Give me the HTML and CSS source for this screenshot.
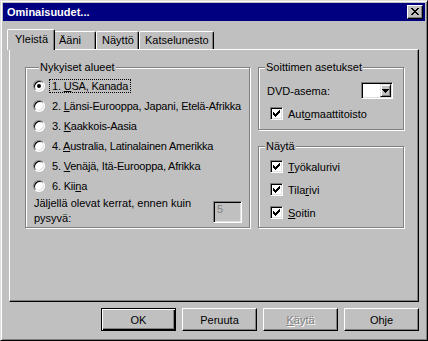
FILE: index.html
```html
<!DOCTYPE html>
<html lang="fi">
<head>
  <meta charset="UTF-8">
  <title>Ominaisuudet</title>
  <link rel="stylesheet" href="styles.css">
</head>
<body>
  <div class="window">
    <div class="titlebar">
      <span class="title">Ominaisuudet...</span>
      <button class="close-btn">
        <svg width="8" height="7" viewBox="0 0 8 7" shape-rendering="crispEdges"><path fill="#000" d="M0 0h2v1H0zM6 0h2v1H6zM1 1h2v1H1zM5 1h2v1H5zM2 2h4v1H2zM3 3h2v1H3zM2 4h4v1H2zM1 5h2v1H1zM5 5h2v1H5zM0 6h2v1H0zM6 6h2v1H6z"/></svg>
      </button>
    </div>

    <div class="dialog-body">
      <div class="tabs">
        <div class="tab active">Yleistä</div>
        <div class="tab">Ääni</div>
        <div class="tab">Näyttö</div>
        <div class="tab">Katselunesto</div>
      </div>

      <div class="panel">
        <div class="group regions">
          <div class="group-title">Nykyiset alueet</div>
          <div class="options">
            <div class="option"><span class="radio checked"></span><span class="option-text focus">1. <u>U</u>SA, Kanada</span></div>
            <div class="option"><span class="radio"></span><span class="option-text">2. <u>L</u>änsi-Eurooppa, Japani, Etelä-Afrikka</span></div>
            <div class="option"><span class="radio"></span><span class="option-text">3. <u>K</u>aakkois-Aasia</span></div>
            <div class="option"><span class="radio"></span><span class="option-text">4. <u>A</u>ustralia, Latinalainen Amerikka</span></div>
            <div class="option"><span class="radio"></span><span class="option-text">5. <u>V</u>enäjä, Itä-Eurooppa, Afrikka</span></div>
            <div class="option"><span class="radio"></span><span class="option-text">6. Kii<u>n</u>a</span></div>
          </div>
          <div class="remaining">
            <span class="remaining-text">Jäljellä olevat kerrat, ennen kuin<br>pysyvä:</span>
            <span class="textbox">5</span>
          </div>
        </div>

        <div class="side">
          <div class="group player">
            <div class="group-title">Soittimen asetukset</div>
            <div class="field-row">
              <span>DVD-asema:</span>
              <span class="combo">
                <span class="combo-btn">
                  <svg width="7" height="4" viewBox="0 0 7 4" shape-rendering="crispEdges"><path fill="#000" d="M0 0h7v1H0zM1 1h5v1H1zM2 2h3v1H2zM3 3h1v1H3z"/></svg>
                </span>
              </span>
            </div>
            <div class="check autoplay">
              <span class="checkbox"><svg width="7" height="7" viewBox="0 0 7 7" shape-rendering="crispEdges"><path fill="#000" d="M0 2h1v3H0zM1 3h1v3H1zM2 4h1v3H2zM3 3h1v3H3zM4 2h1v3H4zM5 1h1v3H5zM6 0h1v3H6z"/></svg></span>
              <span>Aut<u>o</u>maattitoisto</span>
            </div>
          </div>

          <div class="group show">
            <div class="group-title">Näytä</div>
            <div class="checks">
              <div class="check">
                <span class="checkbox"><svg width="7" height="7" viewBox="0 0 7 7" shape-rendering="crispEdges"><path fill="#000" d="M0 2h1v3H0zM1 3h1v3H1zM2 4h1v3H2zM3 3h1v3H3zM4 2h1v3H4zM5 1h1v3H5zM6 0h1v3H6z"/></svg></span>
                <span><u>T</u>yökalurivi</span>
              </div>
              <div class="check">
                <span class="checkbox"><svg width="7" height="7" viewBox="0 0 7 7" shape-rendering="crispEdges"><path fill="#000" d="M0 2h1v3H0zM1 3h1v3H1zM2 4h1v3H2zM3 3h1v3H3zM4 2h1v3H4zM5 1h1v3H5zM6 0h1v3H6z"/></svg></span>
                <span>Tila<u>r</u>ivi</span>
              </div>
              <div class="check">
                <span class="checkbox"><svg width="7" height="7" viewBox="0 0 7 7" shape-rendering="crispEdges"><path fill="#000" d="M0 2h1v3H0zM1 3h1v3H1zM2 4h1v3H2zM3 3h1v3H3zM4 2h1v3H4zM5 1h1v3H5zM6 0h1v3H6z"/></svg></span>
                <span><u>S</u>oitin</span>
              </div>
            </div>
          </div>
        </div>
      </div>

      <div class="buttons">
        <button class="btn default">OK</button>
        <button class="btn">Peruuta</button>
        <button class="btn disabled"><u>K</u>äytä</button>
        <button class="btn">Ohje</button>
      </div>
    </div>
  </div>
</body>
</html>
```

FILE: styles.css
```css
body {
  margin: 0;
  font: 11px "Liberation Sans", Arial, sans-serif;
  color: #000;
}

.window {
  width: 428px;
  height: 341px;
  box-sizing: border-box;
  background: #c0c0c0;
  border: 1px solid;
  border-color: #dfdfdf #000 #000 #dfdfdf;
  box-shadow: inset 1px 1px #fff, inset -1px -1px #808080;
  padding: 2px;
}

.titlebar {
  height: 18px;
  background: #000080;
  color: #fff;
  font-weight: bold;
  display: flex;
  align-items: center;
  justify-content: space-between;
  padding-left: 4px;
}

.close-btn {
  width: 16px;
  height: 14px;
  margin-right: 2px;
  box-sizing: border-box;
  padding: 0 0 1px;
  border: 1px solid;
  border-color: #fff #000 #000 #fff;
  box-shadow: inset -1px -1px #808080;
  background: #c0c0c0;
  display: flex;
  align-items: center;
  justify-content: center;
}

.dialog-body {
  padding: 0 6px;
}

/* tabs */
.tabs {
  display: flex;
  align-items: flex-end;
  height: 20px;
  margin-top: 8px;
}

.tab {
  height: 18px;
  min-width: 43px;
  box-sizing: border-box;
  padding: 2px 4px 0 5px;
  line-height: 13px;
  border: 1px solid;
  border-bottom: none;
  border-color: #fff #000 #000 #fff;
  border-radius: 2px 2px 0 0;
  box-shadow: inset -1px 0 #808080;
}

.tab.active {
  height: 21px;
  margin: 0 -2px -1px;
  padding: 3px 6px 0 7px;
  position: relative;
  z-index: 1;
  background: #c0c0c0;
}

.panel {
  height: 253px;
  box-sizing: border-box;
  border: 1px solid;
  border-color: #fff #000 #000 #fff;
  box-shadow: inset -1px -1px #808080;
  padding: 17px 0 0 15px;
  display: flex;
  gap: 8px;
}

/* group boxes */
.group {
  box-sizing: border-box;
  border: 1px solid #808080;
  box-shadow: 1px 1px #fff, inset 1px 1px #fff;
}

.group-title {
  width: max-content;
  margin: -7px 0 0 6px;
  padding: 0 1px;
  line-height: 13px;
  background: #c0c0c0;
}

.regions {
  width: 225px;
  height: 161px;
  padding: 0 7px;
}

.options {
  margin-top: 2px;
}

.option {
  display: flex;
  align-items: center;
  height: 20px;
  white-space: nowrap;
}

.radio {
  flex: none;
  width: 12px;
  height: 12px;
  box-sizing: border-box;
  margin-right: 4px;
  border-radius: 50%;
  border: 1px solid;
  border-color: #808080 #fff #fff #808080;
  box-shadow: inset 1px 1px #000, inset -1px -1px #dfdfdf;
  background: #fff;
  display: flex;
  align-items: center;
  justify-content: center;
}

.radio.checked::after {
  content: "";
  width: 4px;
  height: 4px;
  border-radius: 50%;
  background: #000;
}

.option-text {
  padding: 0 2px;
  line-height: 12px;
  border: 1px dotted transparent;
  letter-spacing: -0.2px;
}

.option-text.focus {
  border-color: #000;
}

.remaining {
  display: flex;
  justify-content: space-between;
  padding-left: 1px;
  white-space: nowrap;
}

.remaining-text {
  line-height: 15px;
}

.textbox {
  width: 29px;
  height: 22px;
  box-sizing: border-box;
  margin-top: 5px;
  padding: 1px 0 0 3px;
  line-height: 13px;
  color: #808080;
  border: 1px solid;
  border-color: #808080 #fff #fff #808080;
  box-shadow: inset 1px 1px #000, inset -1px -1px #dfdfdf;
}

.side {
  width: 146px;
  display: flex;
  flex-direction: column;
  gap: 16px;
}

.player {
  height: 63px;
}

.show {
  height: 82px;
}

.field-row {
  display: flex;
  align-items: center;
  justify-content: space-between;
  height: 17px;
  margin: 8px 10px 0 8px;
}

.combo {
  width: 32px;
  height: 17px;
  box-sizing: border-box;
  padding: 1px;
  border: 1px solid;
  border-color: #808080 #fff #fff #808080;
  box-shadow: inset 1px 1px #000, inset -1px -1px #dfdfdf;
  background: #fff;
  display: flex;
  justify-content: flex-end;
}

.combo-btn {
  width: 11px;
  box-sizing: border-box;
  border: 1px solid;
  border-color: #dfdfdf #000 #000 #dfdfdf;
  box-shadow: inset 1px 1px #fff, inset -1px -1px #808080;
  background: #c0c0c0;
  display: flex;
  align-items: center;
  justify-content: center;
}

.check {
  display: flex;
  align-items: center;
  height: 13px;
  margin-left: 11px;
}

.autoplay {
  margin-top: 8px;
}

.checks {
  display: flex;
  flex-direction: column;
  gap: 10px;
  margin-top: 7px;
}

.checkbox {
  flex: none;
  width: 13px;
  height: 13px;
  box-sizing: border-box;
  margin-right: 5px;
  border: 1px solid;
  border-color: #808080 #fff #fff #808080;
  box-shadow: inset 1px 1px #000, inset -1px -1px #dfdfdf;
  background: #fff;
  display: flex;
  align-items: center;
  justify-content: center;
}

/* bottom buttons */
.buttons {
  display: flex;
  justify-content: flex-end;
  gap: 6px;
  margin-top: 6px;
}

.btn {
  width: 75px;
  height: 23px;
  box-sizing: border-box;
  padding: 0;
  font: inherit;
  color: #000;
  background: #c0c0c0;
  border: 1px solid;
  border-color: #fff #000 #000 #fff;
  box-shadow: inset -1px -1px #808080;
}

.btn.default {
  border-color: #000;
  box-shadow: inset 1px 1px #fff, inset -1px -1px #000, inset -2px -2px #808080;
}

.btn.disabled {
  color: #808080;
  text-shadow: 1px 1px #fff;
}
```
